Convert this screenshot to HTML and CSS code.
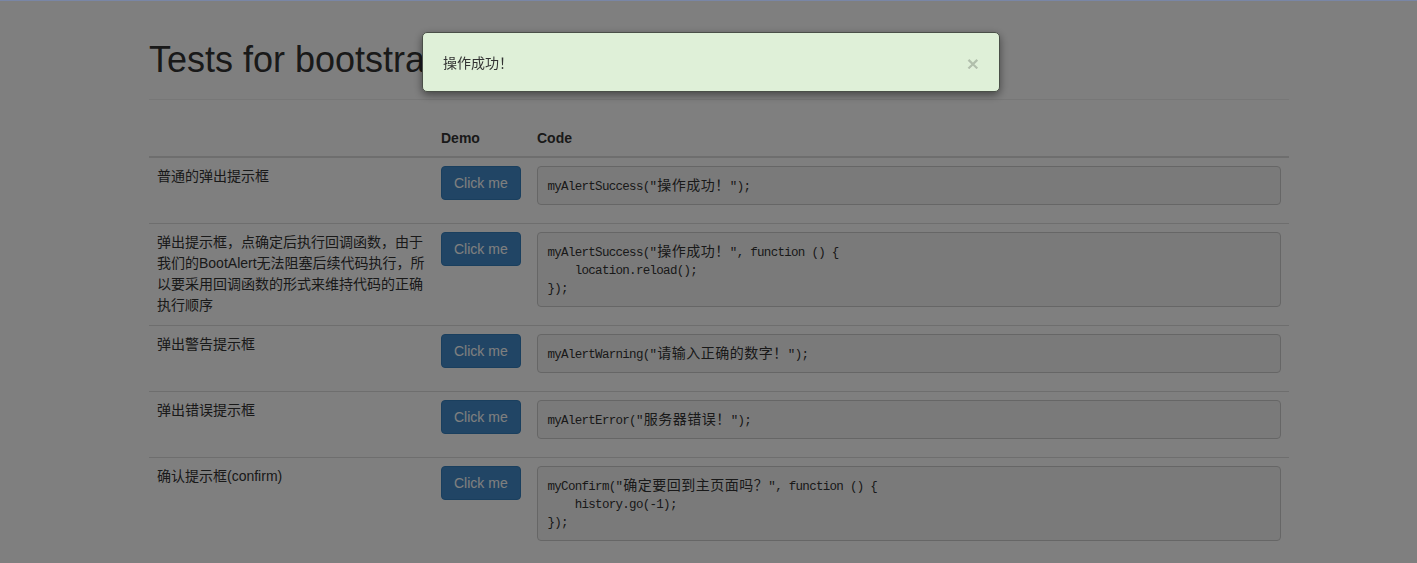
FILE: index.html
```html
<!DOCTYPE html>
<html lang="zh-CN">
<head>
<meta charset="utf-8">
<title>Tests for bootstrap alert</title>
<link rel="stylesheet" href="styles.css">
</head>
<body>
<div class="container">
  <div class="page-header">
    <h1>Tests for bootstrap alert</h1>
  </div>
  <table class="table">
    <thead>
      <tr>
        <th class="col-desc"></th>
        <th class="col-demo">Demo</th>
        <th>Code</th>
      </tr>
    </thead>
    <tbody>
      <tr>
        <td>普通的弹出提示框</td>
        <td><button class="btn">Click me</button></td>
        <td><pre>myAlertSuccess("<span class="zh">操作成功！</span>");</pre></td>
      </tr>
      <tr>
        <td>弹出提示框，点确定后执行回调函数，由于我们的BootAlert无法阻塞后续代码执行，所以要采用回调函数的形式来维持代码的正确执行顺序</td>
        <td><button class="btn">Click me</button></td>
        <td><pre>myAlertSuccess("<span class="zh">操作成功！</span>", function () {
    location.reload();
});</pre></td>
      </tr>
      <tr>
        <td>弹出警告提示框</td>
        <td><button class="btn">Click me</button></td>
        <td><pre>myAlertWarning("<span class="zh">请输入正确的数字！</span>");</pre></td>
      </tr>
      <tr>
        <td>弹出错误提示框</td>
        <td><button class="btn">Click me</button></td>
        <td><pre>myAlertError("<span class="zh">服务器错误！</span>");</pre></td>
      </tr>
      <tr>
        <td>确认提示框(confirm)</td>
        <td><button class="btn">Click me</button></td>
        <td><pre>myConfirm("<span class="zh">确定要回到主页面吗？</span>", function () {
    history.go(-1);
});</pre></td>
      </tr>
    </tbody>
  </table>
</div>

<div class="backdrop"></div>
<div class="alert-box">
  <span class="alert-text">操作成功！</span>
  <span class="close">×</span>
</div>
</body>
</html>
```

FILE: styles.css
```css
* { box-sizing: border-box; }

html, body {
  margin: 0;
  padding: 0;
}

body {
  font-family: "Liberation Sans", "Noto Sans CJK SC", sans-serif;
  font-size: 14px;
  line-height: 20px;
  color: #333;
  background: #fff;
}

.container {
  width: 1140px;
  margin-left: 149px;
  padding-top: 40px;
}

.page-header {
  padding-bottom: 9px;
  margin-bottom: 20px;
  border-bottom: 1px solid #eee;
}

.page-header h1 {
  margin: 0 0 10px;
  font-size: 36px;
  font-weight: 500;
  line-height: 39.6px;
}

.table {
  width: 100%;
  border-collapse: collapse;
  border-spacing: 0;
}

.table th,
.table td {
  padding: 8px;
  text-align: left;
  vertical-align: top;
}

.table th {
  font-weight: bold;
  line-height: 20px;
  border-bottom: 2px solid #ddd;
}

.table td {
  line-height: 21px;
  border-top: 1px solid #ddd;
}

.table tbody tr:first-child td {
  border-top: 0;
}

.col-desc { width: 284px; }
.col-demo { width: 96px; }

.btn {
  display: block;
  font-family: "Liberation Sans", sans-serif;
  font-size: 14px;
  line-height: 20px;
  padding: 6px 12px;
  color: #fff;
  background: #428bca;
  border: 1px solid #357ebd;
  border-radius: 4px;
  cursor: pointer;
}

pre {
  margin: 0 0 10px;
  padding: 11px 9.5px 8px;
  font-family: "Liberation Mono", "Noto Sans CJK SC", monospace;
  font-size: 12.5px;
  letter-spacing: -0.7px;
  line-height: 18px;
  color: #333;
  background: #f5f5f5;
  border: 1px solid #ccc;
  border-radius: 4px;
  white-space: pre;
}

pre .zh {
  font-family: "Noto Sans CJK SC", sans-serif;
  font-size: 14px;
  letter-spacing: 0.5px;
  line-height: 0;
  padding-left: 1px;
}

.backdrop {
  position: fixed;
  inset: 0;
  background: rgba(0, 0, 0, 0.5);
  border-top: 1px solid #7986a6;
}

.alert-box {
  position: fixed;
  top: 32px;
  left: 422px;
  width: 578px;
  height: 60px;
  padding: 0 20px;
  display: flex;
  align-items: center;
  justify-content: space-between;
  background: #dff0d8;
  border: 1px solid #4a4f48;
  border-radius: 5px;
  box-shadow: 0 3px 8px rgba(0, 0, 0, 0.45);
  color: #333;
}

.alert-text {
  font-family: "Noto Sans CJK SC", sans-serif;
  font-size: 14px;
  line-height: 20px;
}

.close {
  font-family: "Liberation Sans", sans-serif;
  font-size: 21px;
  font-weight: bold;
  line-height: 1;
  color: #000;
  opacity: 0.2;
  text-shadow: 0 1px 0 #fff;
  padding-top: 2px;
}
```
